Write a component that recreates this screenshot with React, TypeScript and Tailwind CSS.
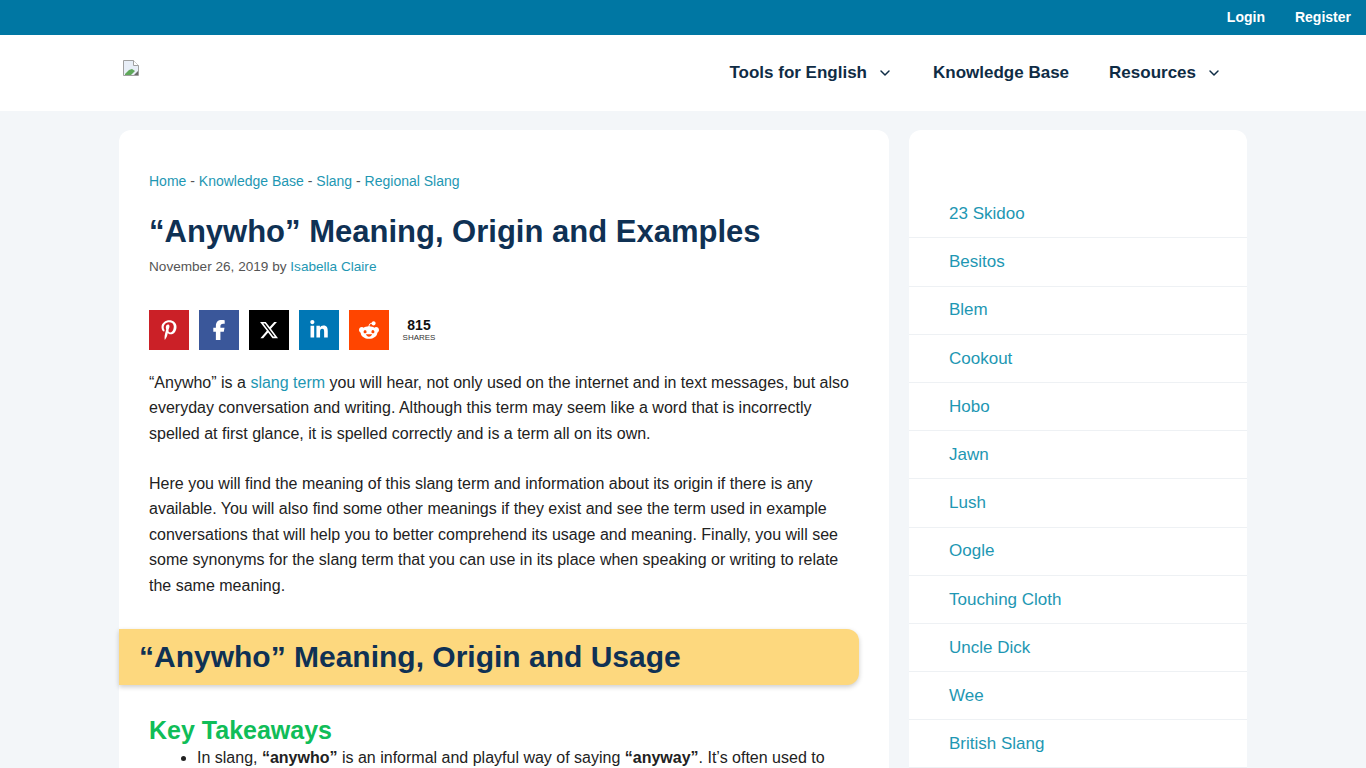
import { ChevronDown } from 'lucide-react';
import {
  FaFacebookF,
  FaLinkedinIn,
  FaPinterestP,
  FaRedditAlien,
  FaXTwitter,
} from 'react-icons/fa6';

const sidebarLinks = [
  '23 Skidoo',
  'Besitos',
  'Blem',
  'Cookout',
  'Hobo',
  'Jawn',
  'Lush',
  'Oogle',
  'Touching Cloth',
  'Uncle Dick',
  'Wee',
  'British Slang',
];

const shareButtons = [
  { label: 'Pinterest', icon: <FaPinterestP />, color: 'bg-[#cb2027]' },
  { label: 'Facebook', icon: <FaFacebookF />, color: 'bg-[#3a579a]' },
  { label: 'X', icon: <FaXTwitter />, color: 'bg-black' },
  { label: 'LinkedIn', icon: <FaLinkedinIn />, color: 'bg-[#0077b5]' },
  { label: 'Reddit', icon: <FaRedditAlien />, color: 'bg-[#ff4500]' },
];

const BrokenImage = () => (
  <svg width="16" height="16" viewBox="0 0 16 16" className="block">
    <path d="M0.5 0.5H10.5L15.5 5.5V15.5H0.5Z" fill="#e8eef7" stroke="#a0a0a0" />
    <path d="M10.5 0.5V5.5H15.5" fill="#fff" stroke="#a0a0a0" />
    <path d="M2 14L6 10L9 9L12 11L8 15H2Z" fill="#5fa85a" />
    <path d="M11 15L15 11V15Z" fill="#6a6a6a" />
  </svg>
);

const NavItem = ({ label, caret }: { label: string; caret?: boolean }) => (
  <a className="flex items-center text-[17px] font-bold text-[#0f2c45]">
    {label}
    {caret && <ChevronDown className="ml-[10px] h-[16px] w-[16px]" strokeWidth={2.2} />}
  </a>
);

export default function App() {
  return (
    <div className="h-[768px] overflow-hidden bg-[#f3f6f9] font-['Liberation_Sans',Arial,sans-serif] text-[16px] leading-[25.5px] text-[#222]">
      <div className="flex h-[35px] items-center justify-end gap-[30px] bg-[#0077a3] pr-[15px] text-[14px] font-bold text-white">
        <a>Login</a>
        <a>Register</a>
      </div>

      <header className="flex h-[76px] items-start justify-between bg-white pl-[123px] pr-[144px]">
        <div className="pt-[25px]">
          <BrokenImage />
        </div>
        <nav className="flex h-full items-center gap-[40px]">
          <NavItem label="Tools for English" caret />
          <NavItem label="Knowledge Base" />
          <NavItem label="Resources" caret />
        </nav>
      </header>

      <div className="flex items-start gap-[20px] pl-[119px] pt-[19px]">
        <main className="h-[640px] w-[770px] rounded-t-xl bg-white pt-[37px]">
          <div className="px-[30px]">
            <p className="text-[14px] leading-[28px] text-[#555]">
              <a className="text-[#1e97b3]">Home</a> - <a className="text-[#1e97b3]">Knowledge Base</a> -{' '}
              <a className="text-[#1e97b3]">Slang</a> - <a className="text-[#1e97b3]">Regional Slang</a>
            </p>
            <h1 className="mt-[17px] text-[31px] font-bold leading-[40px] text-[#0f3154]">
              “Anywho” Meaning, Origin and Examples
            </h1>
            <p className="mt-[5px] text-[13.6px] leading-[20px] text-[#555]">
              November 26, 2019 by <a className="text-[#1e97b3]">Isabella Claire</a>
            </p>

            <div className="mt-[33px] flex items-center gap-[10px]">
              {shareButtons.map((b) => (
                <a
                  key={b.label}
                  aria-label={b.label}
                  className={`flex h-[40px] w-[40px] items-center justify-center text-[20px] text-white ${b.color}`}
                >
                  {b.icon}
                </a>
              ))}
              <div className="flex w-[40px] flex-col items-center">
                <span className="text-[14px] font-bold leading-[16px] text-[#111]">815</span>
                <span className="text-[8px] leading-[10px] text-[#333]">SHARES</span>
              </div>
            </div>

            <p className="mt-[19.5px]">
              “Anywho” is a <a className="text-[#1e97b3]">slang term</a> you will hear, not only used on the
              internet and in text messages, but also everyday conversation and writing. Although this term may
              seem like a word that is incorrectly spelled at first glance, it is spelled correctly and is a term
              all on its own.
            </p>
            <p className="mt-[24.5px]">
              Here you will find the meaning of this slang term and information about its origin if there is any
              available. You will also find some other meanings if they exist and see the term used in example
              conversations that will help you to better comprehend its usage and meaning. Finally, you will see
              some synonyms for the slang term that you can use in its place when speaking or writing to relate
              the same meaning.
            </p>
          </div>

          <h2 className="mt-[31px] flex h-[56px] w-[740px] items-center rounded-r-xl bg-[#fdd87e] pl-[20px] text-[30px] font-bold text-[#0f3154] shadow-[0_2px_5px_rgba(0,0,0,0.2)]">
            “Anywho” Meaning, Origin and Usage
          </h2>

          <div className="px-[30px]">
            <h3 className="mt-[29px] text-[25px] font-bold leading-[32px] text-[#10bd58]">Key Takeaways</h3>
            <ul className="mt-[1px] list-disc pl-[48px]">
              <li className="leading-[22px]">
                In slang, <strong>“anywho”</strong> is an informal and playful way of saying{' '}
                <strong>“anyway”</strong>. It’s often used to
              </li>
            </ul>
          </div>
        </main>

        <aside className="h-[640px] w-[338px] rounded-t-xl bg-white pt-[60.2px]">
          <ul className="text-[17px]">
            {sidebarLinks.map((link) => (
              <li key={link} className="flex h-[48.2px] items-center border-b border-[#eef1f4] pl-[40px] text-[#1e97b3]">
                {link}
              </li>
            ))}
          </ul>
        </aside>
      </div>
    </div>
  );
}
